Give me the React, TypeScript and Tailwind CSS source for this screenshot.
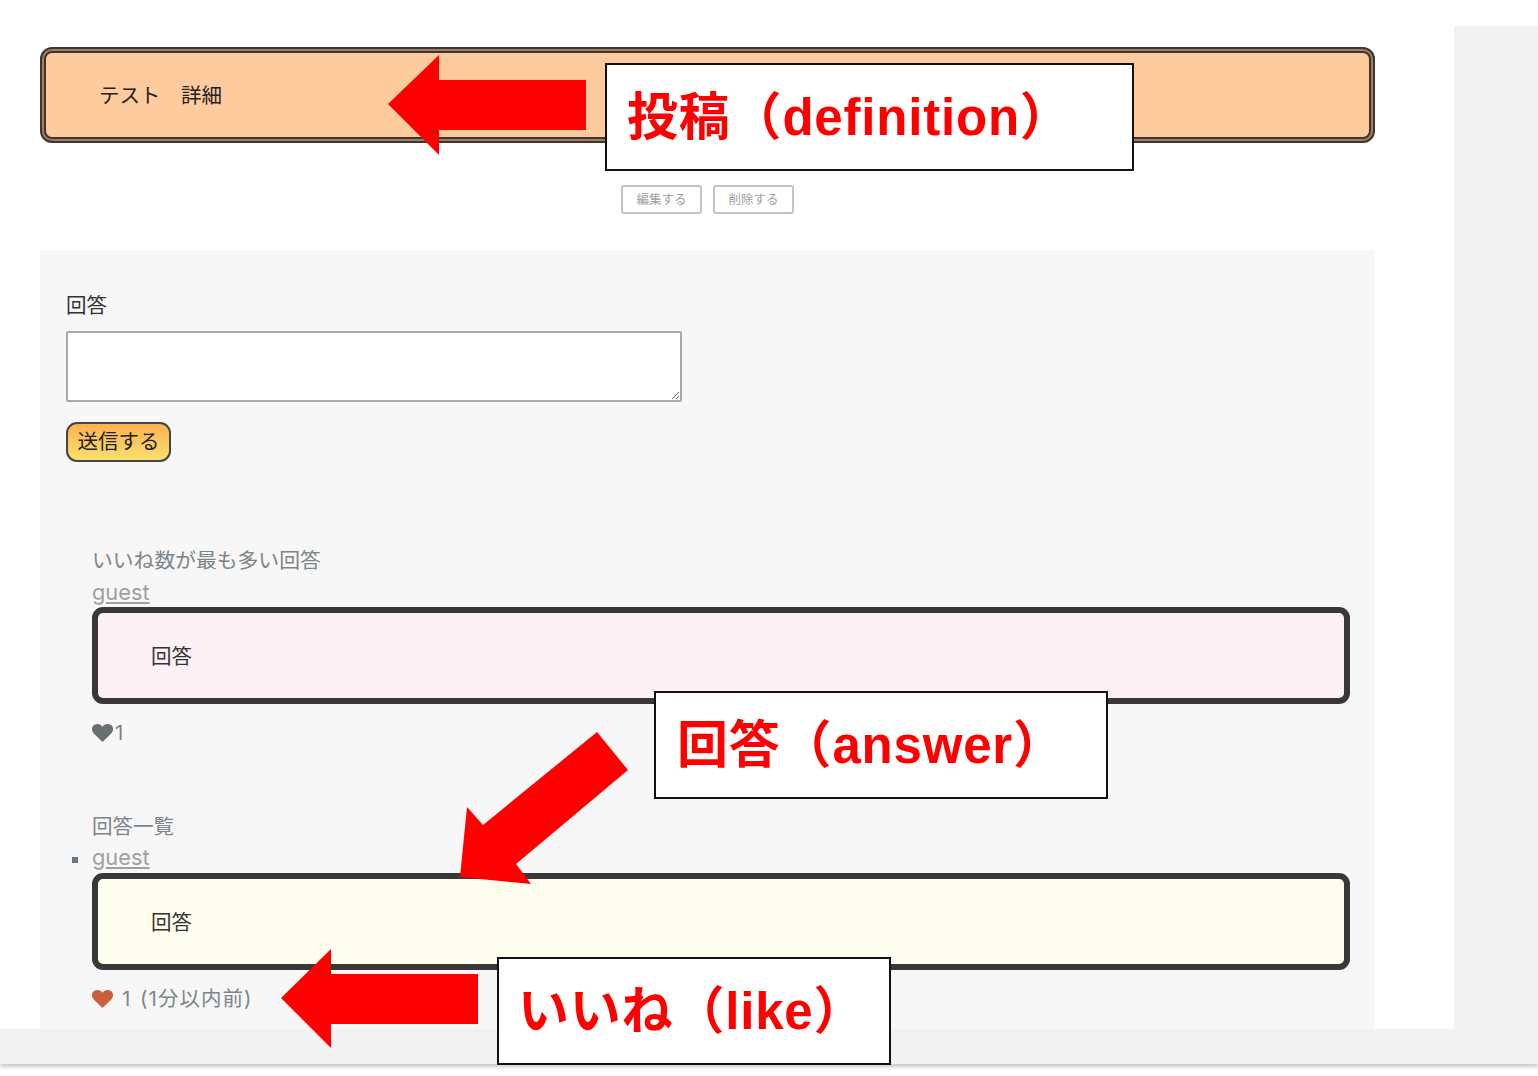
const jpFont = "font-['Inter','Noto_Sans_CJK_JP',sans-serif]"

function Heart({ className }: { className: string }) {
  return (
    <svg viewBox="0 0 21 18" className={className} fill="currentColor">
      <path d="M10.5 18 2 9.8C-.6 7.2-.6 3.6 1.4 1.6 3.6-.6 7.4-.5 9.4 1.6l1.1 1.2 1.1-1.2c2-2.1 5.8-2.2 8-0 2 2 2 5.6-.6 8.2L10.5 18Z" />
    </svg>
  )
}

function AnswerBox({ bg }: { bg: string }) {
  return (
    <div className={`ml-[52px] flex h-[97px] w-[1258px] items-center rounded-[11px] border-[6px] border-[#383838] pt-[3px] pl-[53px] text-[20.5px] leading-none text-[#333] ${bg}`}>
      回答
    </div>
  )
}

function Callout({ className, children }: { className: string; children: React.ReactNode }) {
  return (
    <div className={`absolute flex h-[108px] items-center border-2 border-[#111] bg-white font-['Liberation_Sans','Noto_Sans_CJK_JP',sans-serif] text-[51px] leading-none font-bold tracking-[0.8px] text-[#ff0000] ${className}`}>
      {children}
    </div>
  )
}

export default function App() {
  return (
    <div className={`relative h-[1076px] overflow-hidden bg-white ${jpFont}`}>
      <div className="flex h-[1029px]">
        <main className="w-[1454px] pt-[47px] pl-[40px]">
          <div className="w-[1335px]">
            <div className="flex h-[96px] items-center rounded-[12px] border-2 border-[#40352c] bg-[#fecb9e] pt-[2px] pl-[57px] text-[20.5px] leading-none text-[#222] shadow-[inset_0_0_0_2px_#9a8068,inset_0_0_0_4px_#40352c]">
              テスト　詳細
            </div>

            <div className="mt-[42px] flex justify-center gap-[11px]">
              <button className="h-[29px] w-[81px] rounded-[3px] border-2 border-[#c4c4c4] bg-white pt-[1px] text-[12.5px] text-[#a0a0a0]">編集する</button>
              <button className="h-[29px] w-[81px] rounded-[3px] border-2 border-[#c4c4c4] bg-white pt-[1px] text-[12.5px] text-[#a0a0a0]">削除する</button>
            </div>

            <section className="mt-[36px] h-[779px] overflow-hidden bg-[#f7f7f7] pt-[44px]">
              <div className="pl-[26px]">
                <label className="block text-[20.5px] leading-[24px] text-[#333]">回答</label>
                <textarea className="mt-[13px] block h-[71px] w-[616px] rounded-[2px] border-2 border-[#a9a9a9] bg-white" />
                <button className="mt-[20px] flex h-[40px] w-[105px] items-center justify-center rounded-[11px] border-2 border-[#444] bg-gradient-to-b from-[#fdb04f] to-[#fae070] text-[20.5px] leading-none text-[#222]">
                  送信する
                </button>
              </div>

              <div className="mt-[87px] pl-[52px]">
                <div className="text-[20.8px] leading-[24px] text-[#7d8588]">いいね数が最も多い回答</div>
                <a className="mt-[7px] block text-[21.8px] leading-[24px] text-[#a0a0a0] underline">guest</a>
              </div>
              <div className="mt-[3px]">
                <AnswerBox bg="bg-[#fef1f5]" />
              </div>
              <div className="mt-[17px] ml-[52px] flex h-[24px] items-center gap-[2px] text-[20.5px] leading-none text-[#7d8588]">
                <Heart className="h-[18px] w-[21px] text-[#687074]" />
                <span>1</span>
              </div>

              <div className="mt-[70px] pl-[52px] text-[20.5px] leading-[24px] text-[#7d8588]">回答一覧</div>
              <div className="relative mt-[6px] pl-[52px]">
                <span className="absolute top-[12px] left-[32px] h-[6px] w-[6px] bg-[#66757f]" />
                <a className="block text-[21.8px] leading-[24px] text-[#a0a0a0] underline">guest</a>
              </div>
              <div className="mt-[4px]">
                <AnswerBox bg="bg-[#fefeef]" />
              </div>
              <div className="mt-[17px] ml-[52px] flex h-[24px] items-center gap-[9px] text-[20.5px] leading-none tracking-[1px] text-[#7d8588]">
                <Heart className="h-[18px] w-[21px] text-[#c8603c]" />
                <span className="[word-spacing:2px]">1 (1分以内前)</span>
              </div>
            </section>
          </div>
        </main>
        <aside className="mt-[26px] w-[84px] bg-[#f2f2f2]" />
      </div>
      <div className="h-[35px] bg-[#f2f2f2] shadow-[0_3px_4px_rgba(0,0,0,0.22)]" />

      <svg className="pointer-events-none absolute inset-0" width="1538" height="1076" fill="#ff0000">
        <polygon points="388,104 439,55 439,80 586,80 586,130 439,130 439,155" />
        <polygon points="597,732 628,770 516,864 531,884 460,877 467,807 483,825" />
        <polygon points="281,998 331,949 331,974 478,974 478,1024 331,1024 331,1048" />
      </svg>

      <Callout className="top-[63px] left-[605px] w-[529px] pl-[20px]">投稿（definition）</Callout>
      <Callout className="top-[691px] left-[654px] w-[454px] pl-[21px]">回答（answer）</Callout>
      <Callout className="top-[957px] left-[497px] w-[394px] pl-[19px]">いいね（like）</Callout>
    </div>
  )
}
